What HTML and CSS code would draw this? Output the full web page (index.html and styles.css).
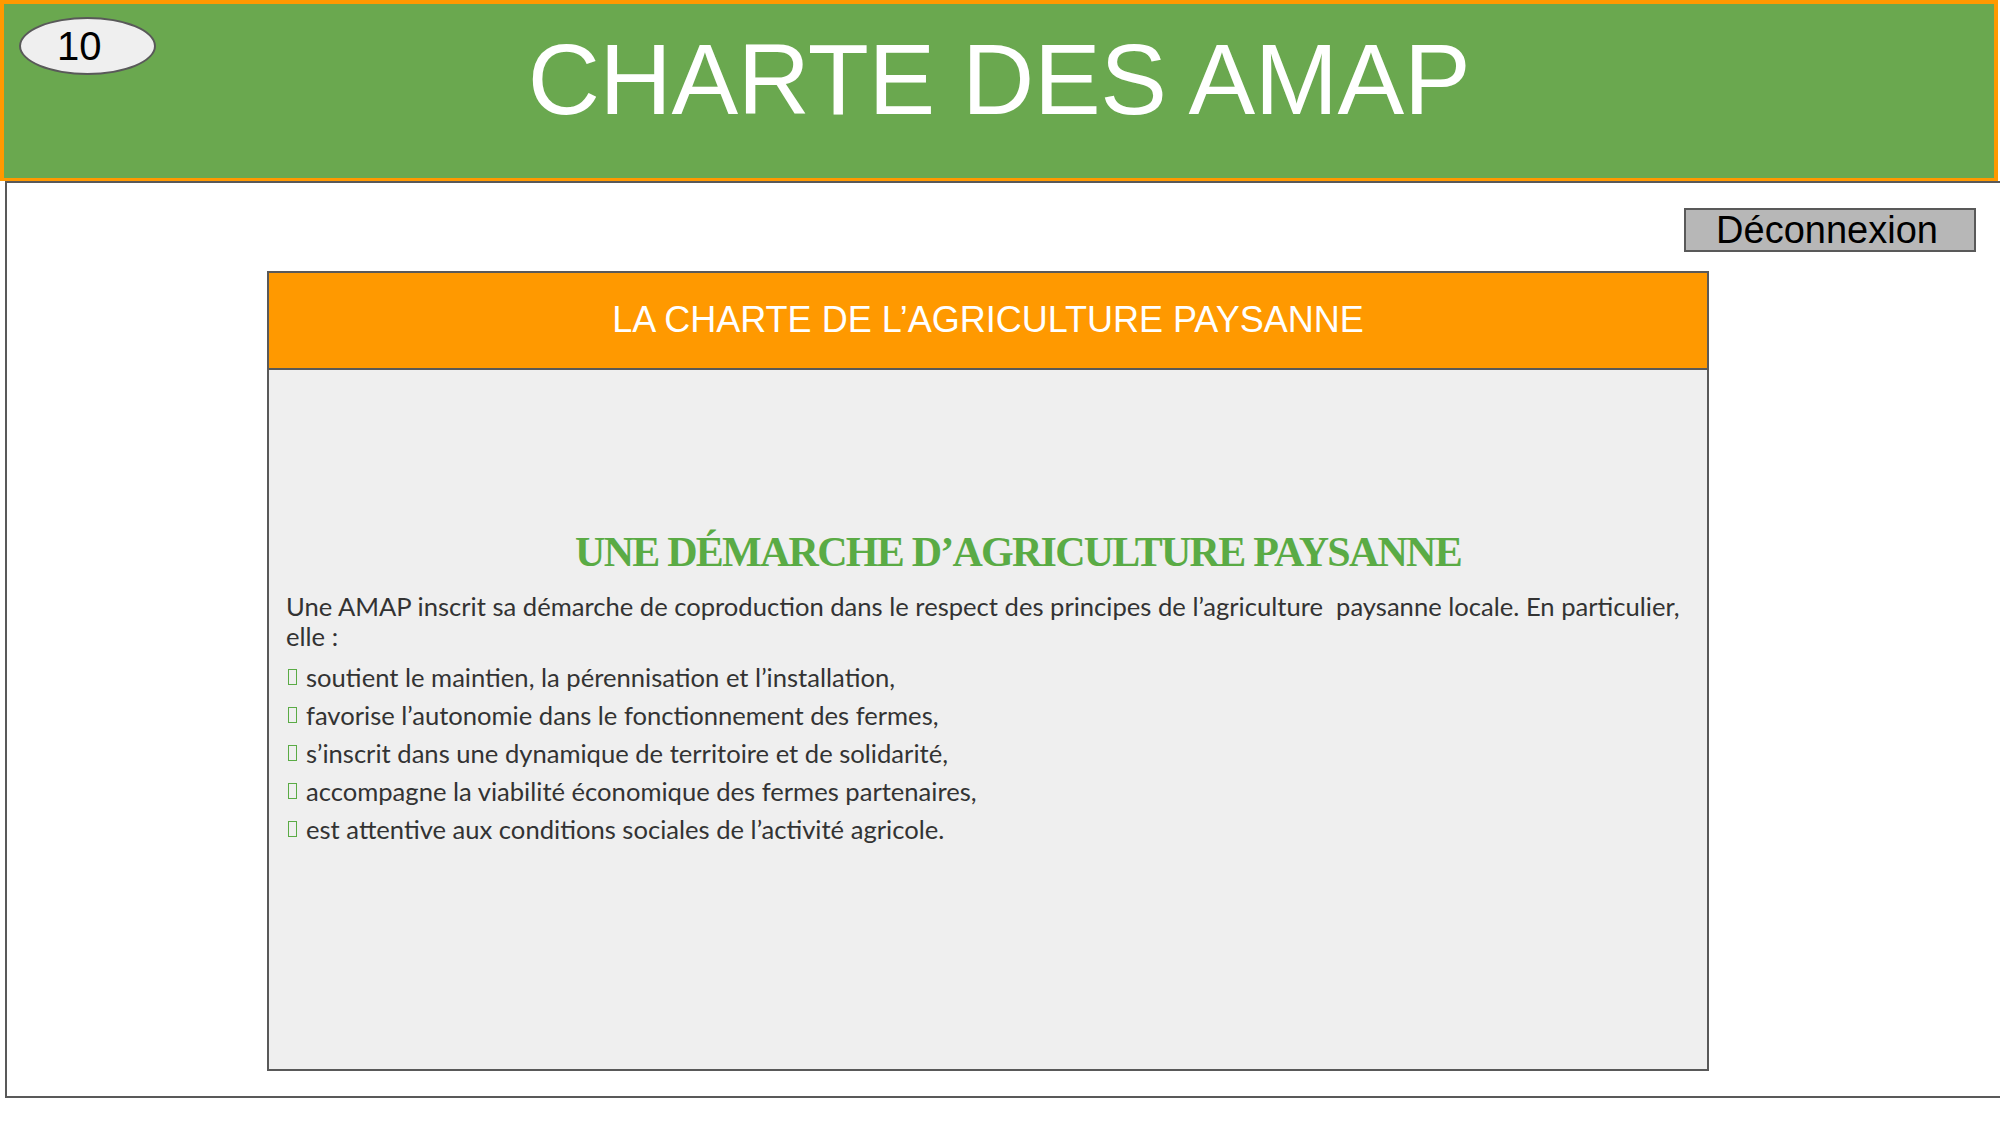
FILE: index.html
```html
<!DOCTYPE html>
<html lang="fr">
<head>
<meta charset="utf-8">
<title>Charte des AMAP</title>
<link rel="stylesheet" href="styles.css">
</head>
<body>
<header class="topbar">
  <div class="slide-num">10</div>
  <h1 class="title">CHARTE DES AMAP</h1>
</header>
<main class="frame">
  <div class="actions">
    <button class="logout">Déconnexion</button>
  </div>
  <section class="card">
    <div class="card-head">LA CHARTE DE L’AGRICULTURE PAYSANNE</div>
    <div class="card-body">
      <h2 class="heading">UNE DÉMARCHE D’AGRICULTURE PAYSANNE</h2>
      <p class="intro">Une AMAP inscrit sa démarche de coproduction dans le respect des principes de l’agriculture&nbsp; paysanne locale. En particulier, elle :</p>
      <ul class="list">
        <li><span class="box"></span>soutient le maintien, la pérennisation et l’installation,</li>
        <li><span class="box"></span>favorise l’autonomie dans le fonctionnement des fermes,</li>
        <li><span class="box"></span>s’inscrit dans une dynamique de territoire et de solidarité,</li>
        <li><span class="box"></span>accompagne la viabilité économique des fermes partenaires,</li>
        <li><span class="box"></span>est attentive aux conditions sociales de l’activité agricole.</li>
      </ul>
    </div>
  </section>
</main>
</body>
</html>
```

FILE: styles.css
```css
* { box-sizing: border-box; }
html, body { margin: 0; padding: 0; }
body {
  width: 2000px;
  height: 1125px;
  overflow: hidden;
  background: #ffffff;
  font-family: "Liberation Sans", Arial, sans-serif;
}
.topbar {
  position: relative;
  height: 181px;
  width: 1998px;
  background: #6aa84f;
  border: 4px solid #ff9900;
  border-bottom-width: 3px;
  display: flex;
  justify-content: center;
}
.slide-num {
  position: absolute;
  left: 15px;
  top: 13px;
  width: 137px;
  height: 58px;
  border: 2px solid #595959;
  border-radius: 50%;
  background: #efefef;
  font-size: 40px;
  line-height: 54px;
  padding-left: 36px;
  color: #000;
}
.title {
  margin: 0;
  padding-top: 20px;
  font-weight: normal;
  font-size: 100px;
  line-height: 110px;
  color: #ffffff;
  letter-spacing: -0.4px;
}
.frame {
  margin-left: 5px;
  height: 917px;
  border: 2px solid #595959;
  border-right: none;
  display: flex;
  flex-direction: column;
}
.actions {
  display: flex;
  justify-content: flex-end;
  padding: 25px 24px 0 0;
  height: 88px;
}
.logout {
  width: 292px;
  height: 44px;
  background: #b7b7b7;
  border: 2px solid #595959;
  font-family: "Liberation Sans", Arial, sans-serif;
  font-size: 38px;
  line-height: 38px;
  color: #000;
  padding: 0 6px 0 0;
  border-radius: 0;
}
.card {
  margin-left: 260px;
  width: 1442px;
  height: 800px;
  border: 2px solid #595959;
  background: #efefef;
  display: flex;
  flex-direction: column;
}
.card-head {
  height: 97px;
  background: #ff9900;
  border-bottom: 2px solid #595959;
  color: #ffffff;
  font-size: 36px;
  display: flex;
  align-items: center;
  justify-content: center;
  padding-bottom: 2px;
}
.card-body {
  padding: 157px 15px 0 17px;
  color: #333333;
  font-family: Lato, "Noto Sans", sans-serif;
}
.heading {
  margin: 0 0 14px 0;
  text-align: center;
  font-family: "Liberation Serif", serif;
  font-weight: bold;
  font-size: 42px;
  line-height: 50px;
  letter-spacing: -1.75px;
  color: #5aab45;
  padding-left: 58px;
}
.intro {
  margin: 0 0 7px 0;
  font-size: 25.6px;
  line-height: 30px;
}
.list {
  list-style: none;
  margin: 0;
  padding: 0;
}
.list li {
  font-size: 25.6px;
  line-height: 38px;
  display: flex;
  align-items: center;
}
.box {
  display: inline-block;
  width: 9px;
  height: 16px;
  border: 1.5px solid #5aab45;
  margin: 0 9px 0 2px;
}
```
